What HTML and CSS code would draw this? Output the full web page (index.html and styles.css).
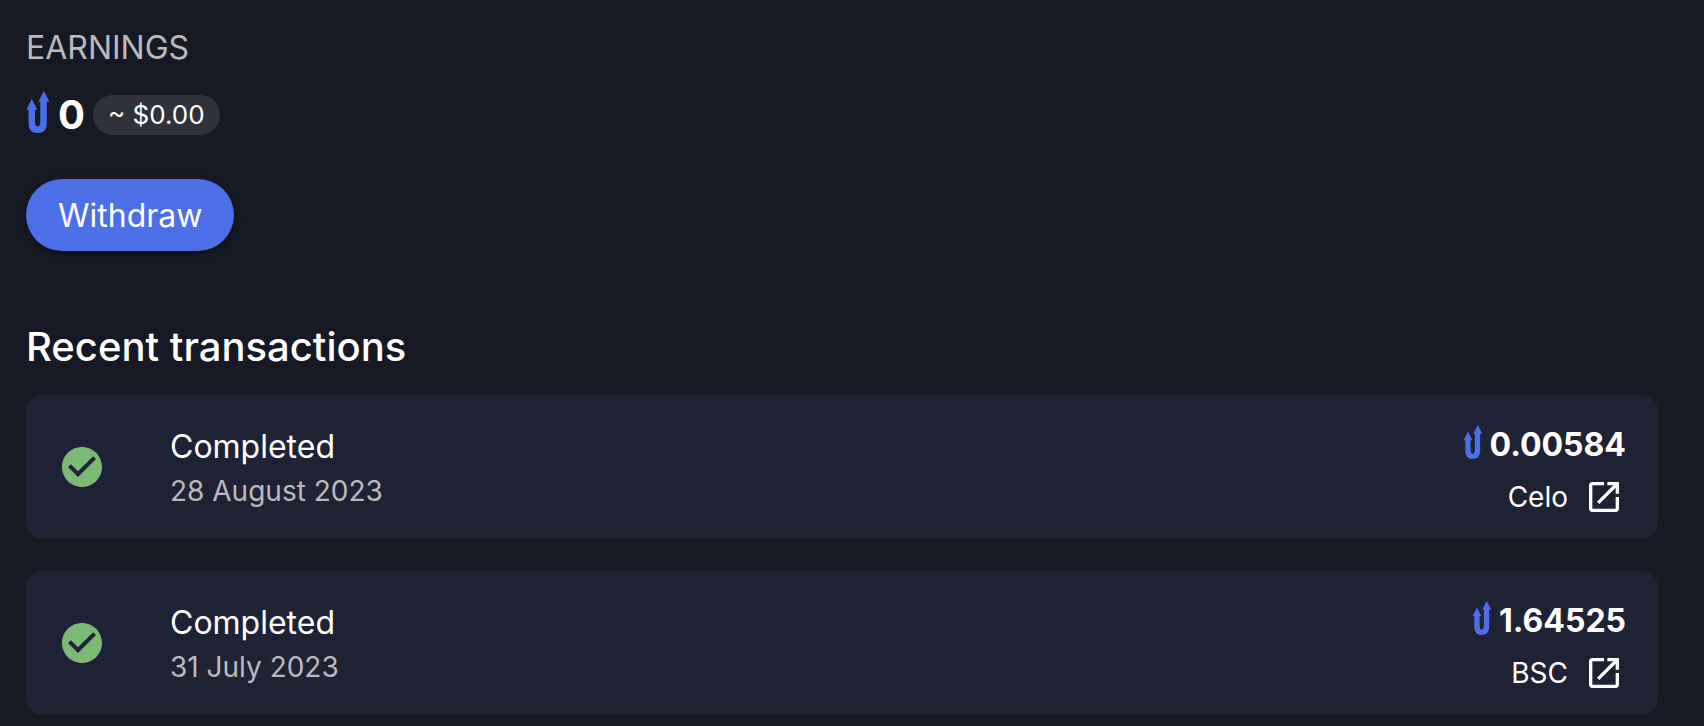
FILE: index.html
```
<!DOCTYPE html>
<html lang="en">

	<head>
		<meta charset="UTF-8">
		<meta name="viewport" content="width=device-width,initial-scale=1" />
		<title>Earnings</title>
		<link rel="stylesheet" href="styles.css">
	</head>

	<body>
		<!-- shared icons -->
		<svg class="sprite" aria-hidden="true">
			<symbol id="token" viewBox="0 0 70 128">
				<path d="M16 24L33 57H26V93Q26 108 34 108Q42 108 42 93V33H36L53 0L70 33H62V98Q62 128 34 128Q6 128 6 98V57H0Z" />
			</symbol>
			<symbol id="check" viewBox="0 0 24 24">
				<path d="M12 2C6.48 2 2 6.48 2 12s4.48 10 10 10 10-4.48 10-10S17.52 2 12 2zm-2 15l-5-5 1.41-1.41L10 14.17l7.59-7.59L19 8l-9 9z" />
			</symbol>
			<symbol id="open" viewBox="0 0 24 24">
				<path d="M19 19H5V5h7V3H5c-1.11 0-2 .9-2 2v14c0 1.1.89 2 2 2h14c1.1 0 2-.9 2-2v-7h-2v7zM14 3v2h3.59l-9.83 9.83 1.41 1.41L19 6.41V10h2V3h-7z" />
			</symbol>
		</svg>

		<main>
			<section class="earnings">
				<h1>EARNINGS</h1>
				<div class="balance">
					<svg class="token"><use href="#token" /></svg>
					<strong>0</strong>
					<span class="chip">~ $0.00</span>
				</div>
				<button type="button" class="withdraw">Withdraw</button>
			</section>

			<section>
				<h2>Recent transactions</h2>
				<ul class="list">
					<li>
						<svg class="status"><use href="#check" /></svg>
						<div class="info">
							<p>Completed</p>
							<time datetime="2023-08-28">28 August 2023</time>
						</div>
						<div class="detail">
							<div class="amount">
								<svg class="token"><use href="#token" /></svg>
								<strong>0.00584</strong>
							</div>
							<a href="#" class="chain">Celo <svg class="open"><use href="#open" /></svg></a>
						</div>
					</li>
					<li>
						<svg class="status"><use href="#check" /></svg>
						<div class="info">
							<p>Completed</p>
							<time datetime="2023-07-31">31 July 2023</time>
						</div>
						<div class="detail">
							<div class="amount">
								<svg class="token"><use href="#token" /></svg>
								<strong>1.64525</strong>
							</div>
							<a href="#" class="chain">BSC <svg class="open"><use href="#open" /></svg></a>
						</div>
					</li>
				</ul>
			</section>
		</main>
	</body>

</html>
```
FILE: styles.css
```
* {
	margin: 0;
	padding: 0;
	box-sizing: border-box;
}

body {
	background: #161824;
	color: #FFFFFF;
	font-family: Inter, "Liberation Sans", sans-serif;
	font-size: 32px;
	line-height: 48px;
}

main {
	padding: 24px 46px 8px 26px;
}

svg {
	display: block;
	flex: none;
	fill: currentColor;
}

.sprite {
	display: none;
}

h1 {
	font-size: 32px;
	font-weight: 400;
	color: #B9BABF;
}

.balance {
	display: flex;
	align-items: center;
	gap: 8px;
	height: 53px;
	margin-top: 16px;
}

.token {
	fill: #4C6FE8;
}

.balance .token {
	width: 24px;
	height: 42px;
	margin-bottom: 6px;
}

.balance strong {
	font-size: 40px;
	font-weight: 700;
}

.chip {
	height: 40px;
	line-height: 40px;
	padding: 0 15px;
	border-radius: 20px;
	background: #2F313B;
	font-size: 26px;
}

.withdraw {
	display: block;
	height: 72px;
	margin-top: 38px;
	padding: 0 32px;
	border: 0;
	border-radius: 36px;
	background: #4C6FE8;
	color: #FFFFFF;
	font-family: inherit;
	font-size: 32px;
	box-shadow: 0 2px 6px rgba(0, 0, 0, 0.4);
	cursor: pointer;
}

h2 {
	margin-top: 64px;
	font-size: 40px;
	font-weight: 500;
	line-height: 64px;
}

.list {
	display: flex;
	flex-direction: column;
	gap: 32px;
	margin-top: 16px;
	list-style: none;
}

.list li {
	display: flex;
	align-items: center;
	height: 144px;
	padding: 0 32px;
	border-radius: 16px;
	background: #1F2234;
}

.status {
	width: 48px;
	height: 48px;
	color: #7CB974;
}

.info {
	flex: 1;
	margin-left: 64px;
}

.info time {
	display: block;
	font-size: 28px;
	line-height: 40px;
	color: #B9BABF;
}

.detail {
	display: flex;
	flex-direction: column;
	align-items: flex-end;
	gap: 8px;
	padding-top: 3px;
}

.amount {
	display: flex;
	align-items: center;
	gap: 7px;
}

.amount .token {
	width: 20px;
	height: 34px;
	margin-bottom: 6px;
}

.amount strong {
	font-weight: 700;
}

.chain {
	display: flex;
	align-items: center;
	gap: 16px;
	padding-right: 2px;
	color: #FFFFFF;
	font-size: 28px;
	line-height: 40px;
	text-decoration: none;
}

.open {
	width: 40px;
	height: 40px;
}
```
